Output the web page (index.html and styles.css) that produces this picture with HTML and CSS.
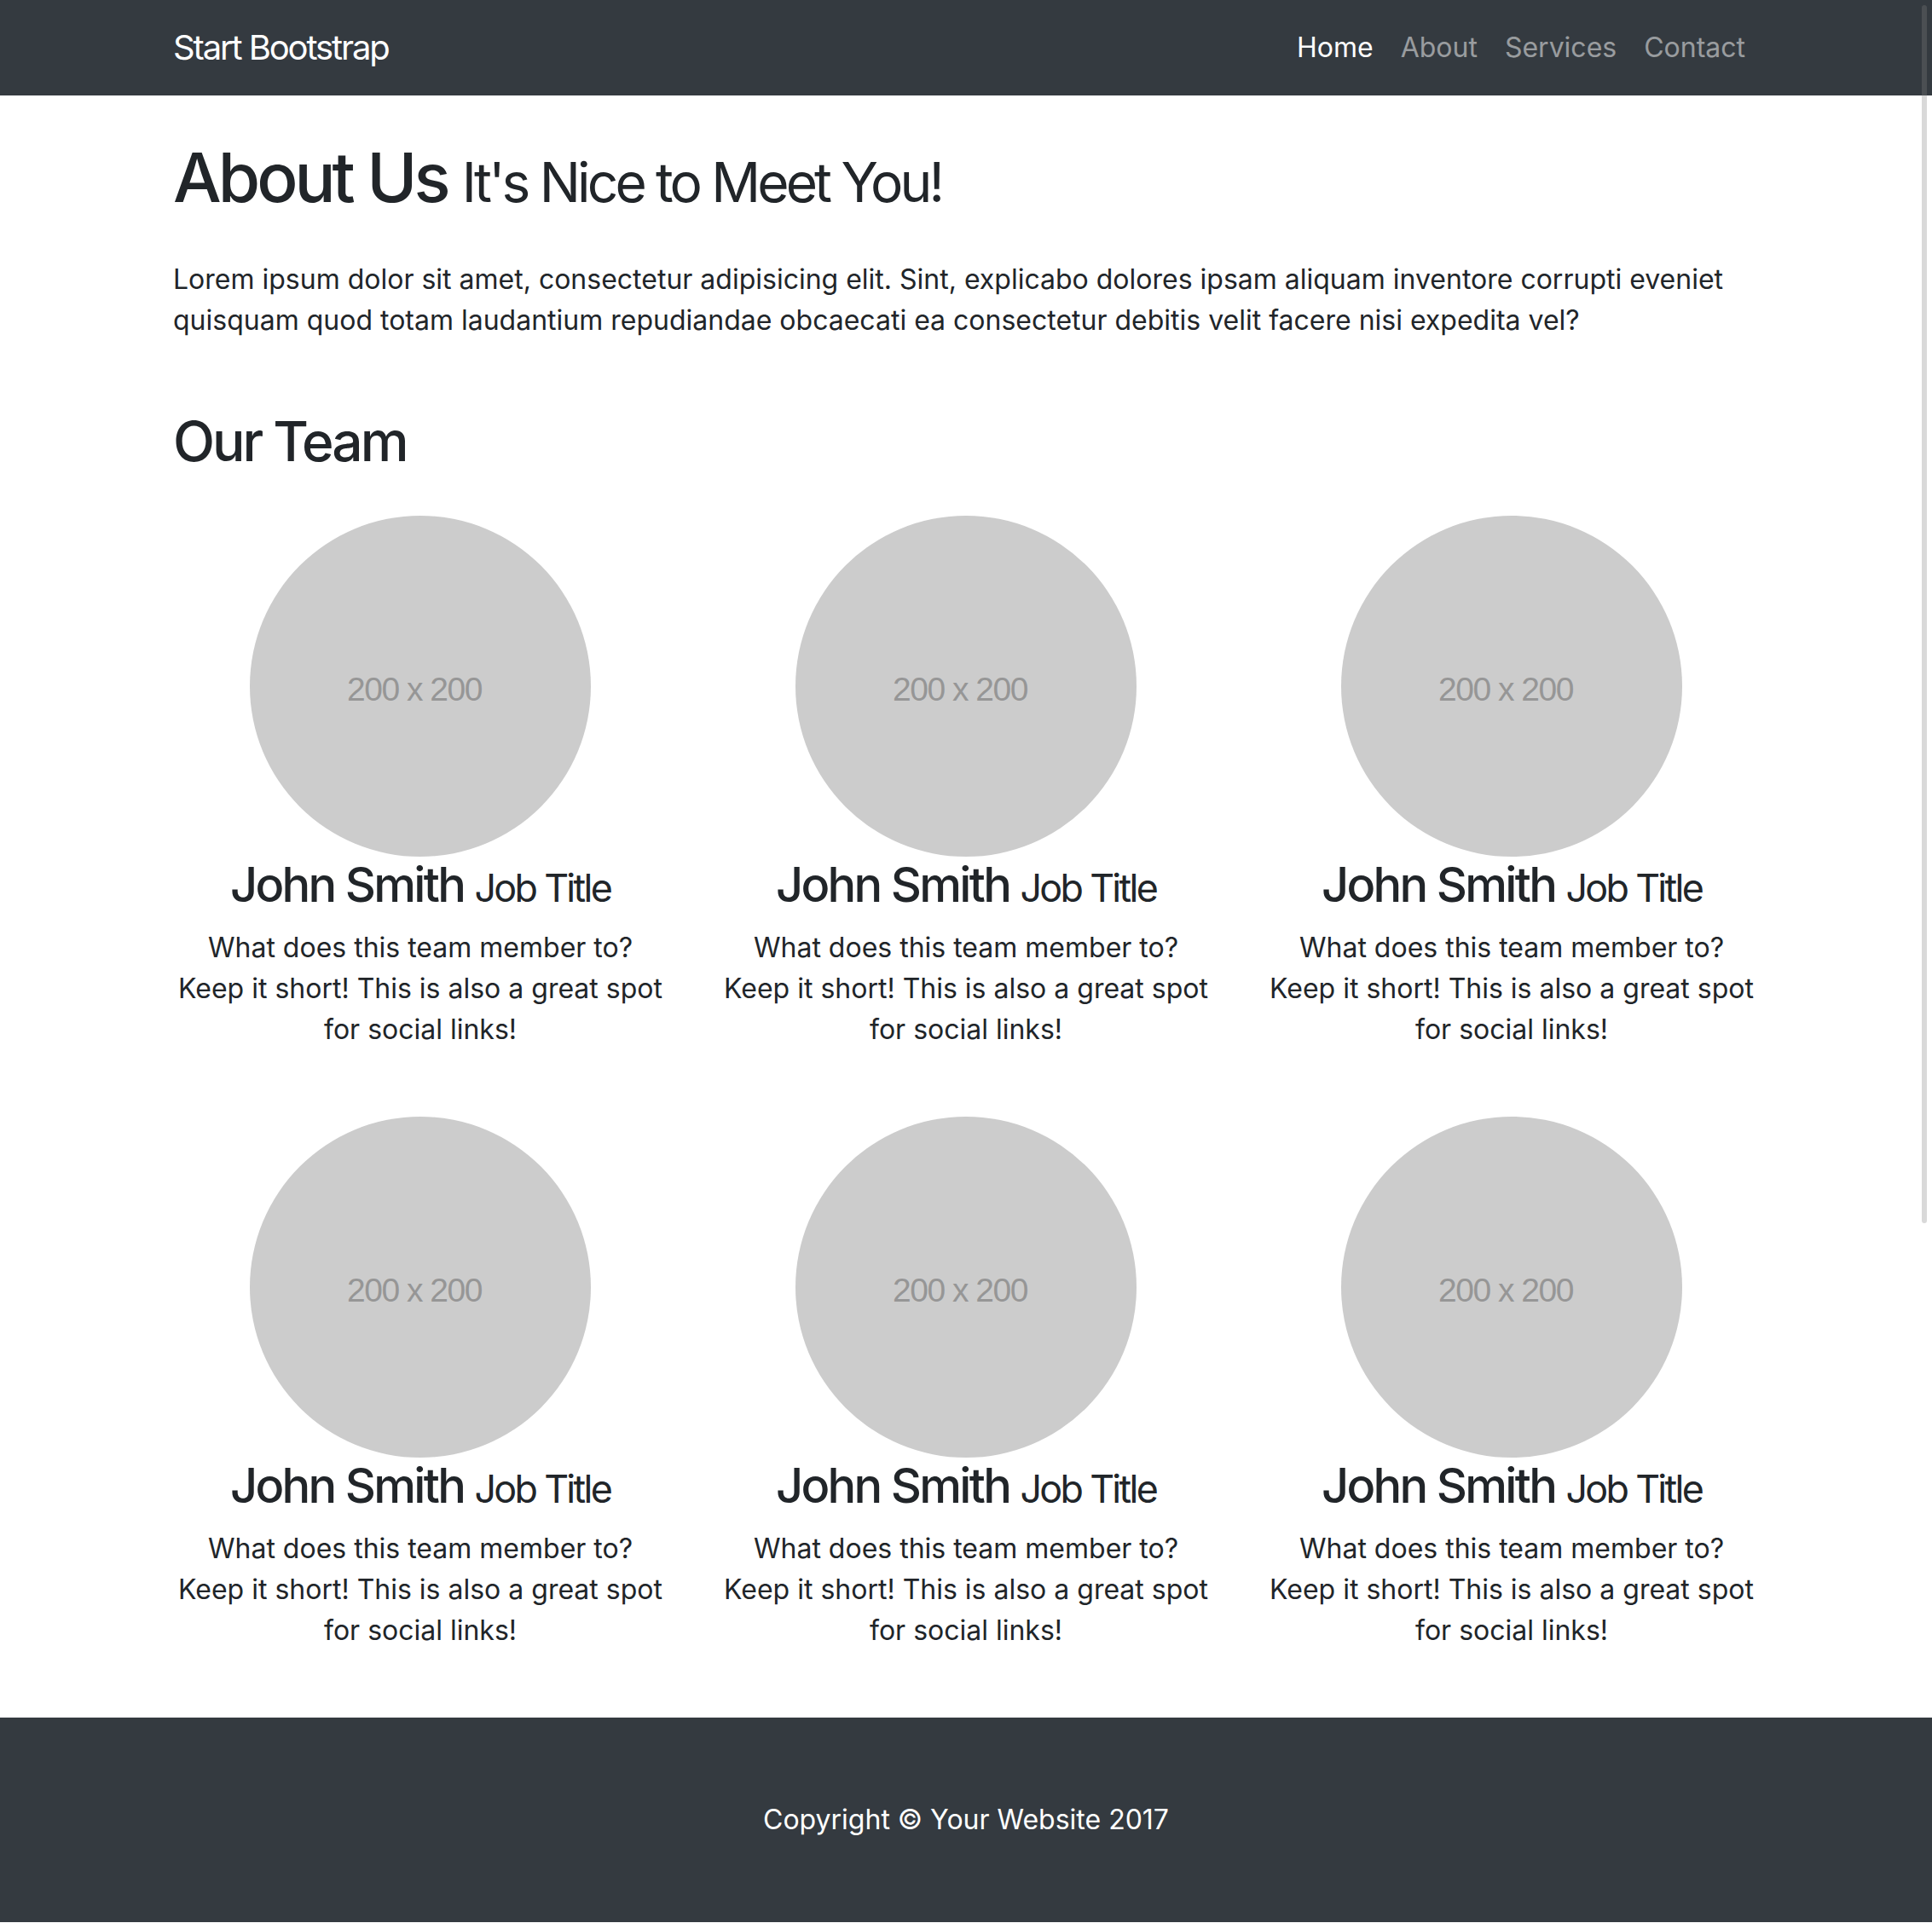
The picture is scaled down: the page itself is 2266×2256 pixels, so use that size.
FILE: index.html
```html
<!DOCTYPE html>
<html lang="en">
<head>
<meta charset="utf-8">
<title>About - Start Bootstrap</title>
<link rel="stylesheet" href="styles.css">
</head>
<body>
<nav class="navbar">
  <div class="container nav-inner">
    <a class="brand" href="#">Start Bootstrap</a>
    <ul class="nav-links">
      <li><a class="nav-link active" href="#">Home</a></li>
      <li><a class="nav-link" href="#">About</a></li>
      <li><a class="nav-link" href="#">Services</a></li>
      <li><a class="nav-link" href="#">Contact</a></li>
    </ul>
  </div>
</nav>

<main class="container">
  <h1 class="page-title">About Us <small>It's Nice to Meet You!</small></h1>
  <p class="lead-text">Lorem ipsum dolor sit amet, consectetur adipisicing elit. Sint, explicabo dolores ipsam aliquam inventore corrupti eveniet quisquam quod totam laudantium repudiandae obcaecati ea consectetur debitis velit facere nisi expedita vel?</p>

  <div class="team-grid">
    <h2 class="section-title">Our Team</h2>
    <div class="member">
      <div class="avatar"><span>200 x 200</span></div>
      <h3 class="member-name">John Smith <small>Job Title</small></h3>
      <p class="member-text">What does this team member to? Keep it short! This is also a great spot for social links!</p>
    </div>
    <div class="member">
      <div class="avatar"><span>200 x 200</span></div>
      <h3 class="member-name">John Smith <small>Job Title</small></h3>
      <p class="member-text">What does this team member to? Keep it short! This is also a great spot for social links!</p>
    </div>
    <div class="member">
      <div class="avatar"><span>200 x 200</span></div>
      <h3 class="member-name">John Smith <small>Job Title</small></h3>
      <p class="member-text">What does this team member to? Keep it short! This is also a great spot for social links!</p>
    </div>
    <div class="member">
      <div class="avatar"><span>200 x 200</span></div>
      <h3 class="member-name">John Smith <small>Job Title</small></h3>
      <p class="member-text">What does this team member to? Keep it short! This is also a great spot for social links!</p>
    </div>
    <div class="member">
      <div class="avatar"><span>200 x 200</span></div>
      <h3 class="member-name">John Smith <small>Job Title</small></h3>
      <p class="member-text">What does this team member to? Keep it short! This is also a great spot for social links!</p>
    </div>
    <div class="member">
      <div class="avatar"><span>200 x 200</span></div>
      <h3 class="member-name">John Smith <small>Job Title</small></h3>
      <p class="member-text">What does this team member to? Keep it short! This is also a great spot for social links!</p>
    </div>
  </div>
</main>

<footer class="footer">
  <div class="container">
    <p class="copyright">Copyright &copy; Your Website 2017</p>
  </div>
</footer>

<div class="scroll-thumb"></div>
</body>
</html>
```

FILE: styles.css
```css
* { box-sizing: border-box; }

html, body {
  margin: 0;
  padding: 0;
}

body {
  font-family: "Inter", "Roboto", "Liberation Sans", sans-serif;
  font-size: 32px;
  line-height: 1.5;
  color: #212529;
  background: #fff;
}

.container {
  width: 1920px;
  margin: 0 auto;
  padding: 0 30px;
}

/* Navbar */
.navbar {
  background: #343a40;
  height: 112px;
  padding: 16px 0;
}

.nav-inner {
  display: flex;
  align-items: center;
  justify-content: space-between;
  height: 80px;
}

.brand {
  color: #fff;
  text-decoration: none;
  font-size: 40px;
  line-height: 60px;
  padding: 10px 0;
  letter-spacing: -0.053em;
}

.nav-links {
  display: flex;
  list-style: none;
  margin: 0;
  padding: 0;
}

.nav-link {
  display: block;
  padding: 16px 16px;
  color: rgba(255, 255, 255, 0.5);
  text-decoration: none;
  line-height: 48px;
}

.nav-link.active {
  color: #fff;
}

/* Headings */
.page-title {
  font-size: 80px;
  font-weight: 500;
  line-height: 1.2;
  margin: 48px 0;
  letter-spacing: -0.05em;
}

.page-title small,
.member-name small {
  font-size: 80%;
  font-weight: 400;
  letter-spacing: -0.06em;
}

.lead-text {
  margin: 0 0 32px;
}

.section-title {
  grid-column: 1 / -1;
  font-size: 64px;
  font-weight: 500;
  line-height: 1.2;
  margin: 48px 0;
  letter-spacing: -0.047em;
}

/* Team */
.team-grid {
  display: grid;
  grid-template-columns: repeat(3, 1fr);
  column-gap: 60px;
}

.member {
  text-align: center;
  margin-bottom: 46px;
}

.avatar {
  width: 400px;
  height: 400px;
  margin: 0 auto;
  border-radius: 50%;
  background: #cccccc;
  display: flex;
  align-items: center;
  justify-content: center;
}

.avatar span {
  font-family: "Liberation Sans", Arial, sans-serif;
  font-size: 39px;
  color: #969696;
  letter-spacing: -1.5px;
  padding-right: 14px;
  padding-top: 8px;
}

.member-name {
  font-size: 56px;
  font-weight: 500;
  line-height: 1.2;
  margin: 0 0 16px;
  letter-spacing: -0.048em;
}

.member-text {
  margin: 0 0 32px;
}

/* Footer */
.footer {
  background: #343a40;
  padding: 96px 0;
}

.copyright {
  margin: 0;
  color: #fff;
  text-align: center;
}

.scroll-thumb {
  position: fixed;
  top: 6px;
  right: 6px;
  width: 6px;
  height: 1429px;
  border-radius: 3px;
  background: rgba(128, 128, 128, 0.3);
}
```
